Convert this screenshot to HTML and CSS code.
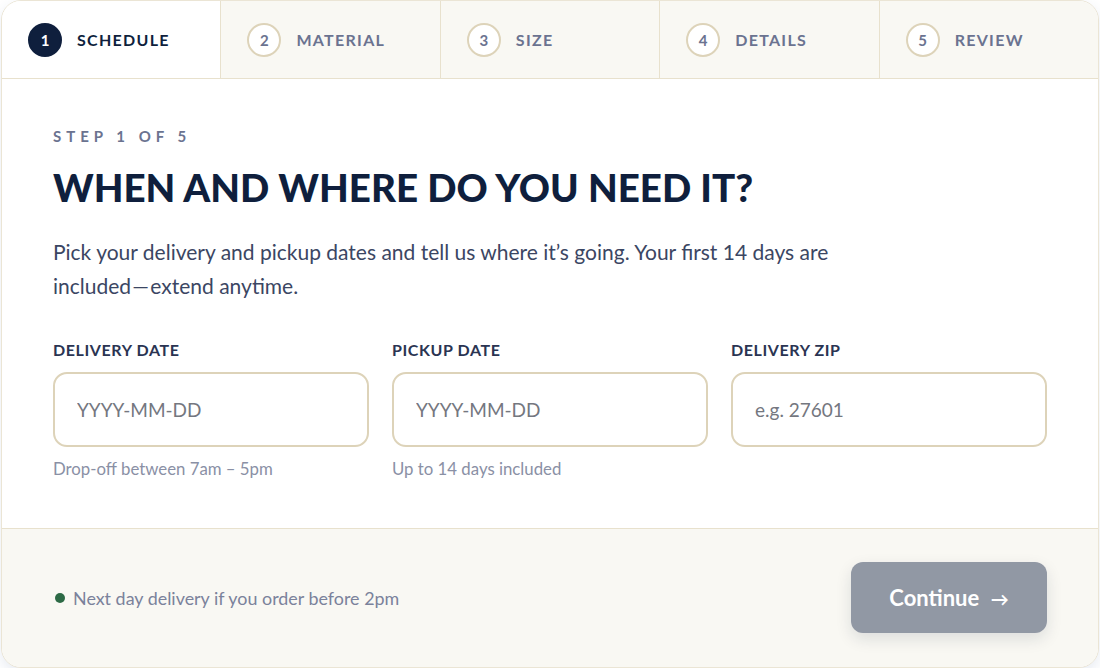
FILE: index.html
```html
<!DOCTYPE html>
<html lang="en">
<head>
    <meta charset="UTF-8">
    <meta name="viewport" content="width=device-width, initial-scale=1.0">
    <title>Schedule your delivery</title>
    <link rel="stylesheet" href="styles.css">
</head>
<body>
    <div class="card">
        <!-- ステップのタブ -->
        <nav class="steps">
            <div class="step active"><span class="num">1</span><span class="name">Schedule</span></div>
            <div class="step"><span class="num">2</span><span class="name">Material</span></div>
            <div class="step"><span class="num">3</span><span class="name">Size</span></div>
            <div class="step"><span class="num">4</span><span class="name">Details</span></div>
            <div class="step"><span class="num">5</span><span class="name">Review</span></div>
        </nav>

        <section class="panel">
            <p class="eyebrow">Step 1 of 5</p>
            <h1>When and where do you need it?</h1>
            <p class="lead">Pick your delivery and pickup dates and tell us where it’s going. Your first 14 days are included&#8202;—&#8202;extend anytime.</p>

            <div class="fields">
                <div class="field">
                    <label for="delivery">Delivery date</label>
                    <input type="text" id="delivery" placeholder="YYYY-MM-DD">
                    <span class="hint">Drop-off between 7am – 5pm</span>
                </div>
                <div class="field">
                    <label for="pickup">Pickup date</label>
                    <input type="text" id="pickup" placeholder="YYYY-MM-DD">
                    <span class="hint">Up to 14 days included</span>
                </div>
                <div class="field">
                    <label for="zip">Delivery zip</label>
                    <input type="text" id="zip" placeholder="e.g. 27601">
                </div>
            </div>
        </section>

        <footer class="actions">
            <p class="note"><span class="dot"></span>Next day delivery if you order before 2pm</p>
            <button type="button" class="continue">Continue <span class="arrow">→</span></button>
        </footer>
    </div>
</body>
</html>
```

FILE: styles.css
```css
/* 全体 */
body {
    margin: 0;
    padding: 0 1px;
    background-color: #ffffff;
    font-family: 'Lato', 'Open Sans', sans-serif;
    color: #0f1f3d;
}

.card {
    background-color: #ffffff;
    border: 1px solid #ebe5d5;
    border-radius: 20px;
    overflow: hidden;
    box-shadow: 0 5px 14px rgba(60, 90, 150, 0.12);
}

/* タブ */
.steps {
    display: flex;
    height: 77px;
    background-color: #f9f8f3;
    border-bottom: 1px solid #e8e1cd;
}

.step {
    flex: 1;
    display: flex;
    align-items: center;
    gap: 15px;
    padding-left: 26px;
    border-right: 1px solid #e8e1cd;
}

.step:last-child {
    border-right: none;
}

.step.active {
    background-color: #ffffff;
}

.num {
    width: 30px;
    height: 30px;
    border: 2px solid #ddd3b9;
    border-radius: 50%;
    background-color: #ffffff;
    display: flex;
    align-items: center;
    justify-content: center;
    font-size: 15px;
    font-weight: 700;
    color: #6b7390;
}

.active .num {
    background-color: #0f1f3d;
    border-color: #0f1f3d;
    color: #ffffff;
}

.name {
    font-size: 16px;
    font-weight: 700;
    letter-spacing: 1.3px;
    text-transform: uppercase;
    color: #6b7390;
}

.active .name {
    color: #0f1f3d;
}

/* 本文 */
.panel {
    padding: 47px 51px 49px;
}

.eyebrow {
    margin: 0;
    font-size: 15px;
    line-height: 20px;
    font-weight: 700;
    letter-spacing: 5px;
    text-transform: uppercase;
    color: #6b7390;
}

h1 {
    margin: 17px 0 0;
    font-size: 38.5px;
    line-height: 48px;
    font-weight: 900;
    text-transform: uppercase;
    color: #0f1f3d;
}

.lead {
    margin: 24px 0 0;
    max-width: 800px;
    font-size: 21px;
    line-height: 34px;
    color: #3b4663;
}

.fields {
    display: grid;
    grid-template-columns: repeat(3, 1fr);
    gap: 23px;
    margin-top: 37px;
}

.field {
    display: flex;
    flex-direction: column;
}

label {
    font-size: 16px;
    line-height: 20px;
    font-weight: 700;
    letter-spacing: 0.6px;
    text-transform: uppercase;
    color: #2a3452;
}

input {
    margin-top: 12px;
    height: 75px;
    box-sizing: border-box;
    padding: 0 22px;
    border: 2px solid #ddd3b9;
    border-radius: 14px;
    background-color: #ffffff;
    font-family: inherit;
    font-size: 19px;
    color: #0f1f3d;
}

input::placeholder {
    color: #74777f;
}

.hint {
    margin-top: 12px;
    font-size: 16.8px;
    line-height: 20px;
    color: #8a90a5;
}

/* フッター */
.actions {
    display: flex;
    align-items: center;
    justify-content: space-between;
    padding: 33px 51px 34px;
    background-color: #f9f8f3;
    border-top: 1px solid #e8e1cd;
}

.note {
    margin: 0;
    display: flex;
    align-items: center;
    gap: 8px;
    font-size: 17.9px;
    color: #7b829b;
    padding-left: 2px;
}

.dot {
    width: 10px;
    height: 10px;
    border-radius: 50%;
    background-color: #2d6a45;
}

.continue {
    width: 196px;
    height: 71px;
    border: none;
    border-radius: 12px;
    background-color: #9198a4;
    color: #ffffff;
    font-family: inherit;
    font-size: 22px;
    font-weight: 700;
    box-shadow: 0 6px 16px rgba(15, 31, 61, 0.12);
    cursor: pointer;
}

.arrow {
    margin-left: 6px;
    font-size: 18px;
}
```
